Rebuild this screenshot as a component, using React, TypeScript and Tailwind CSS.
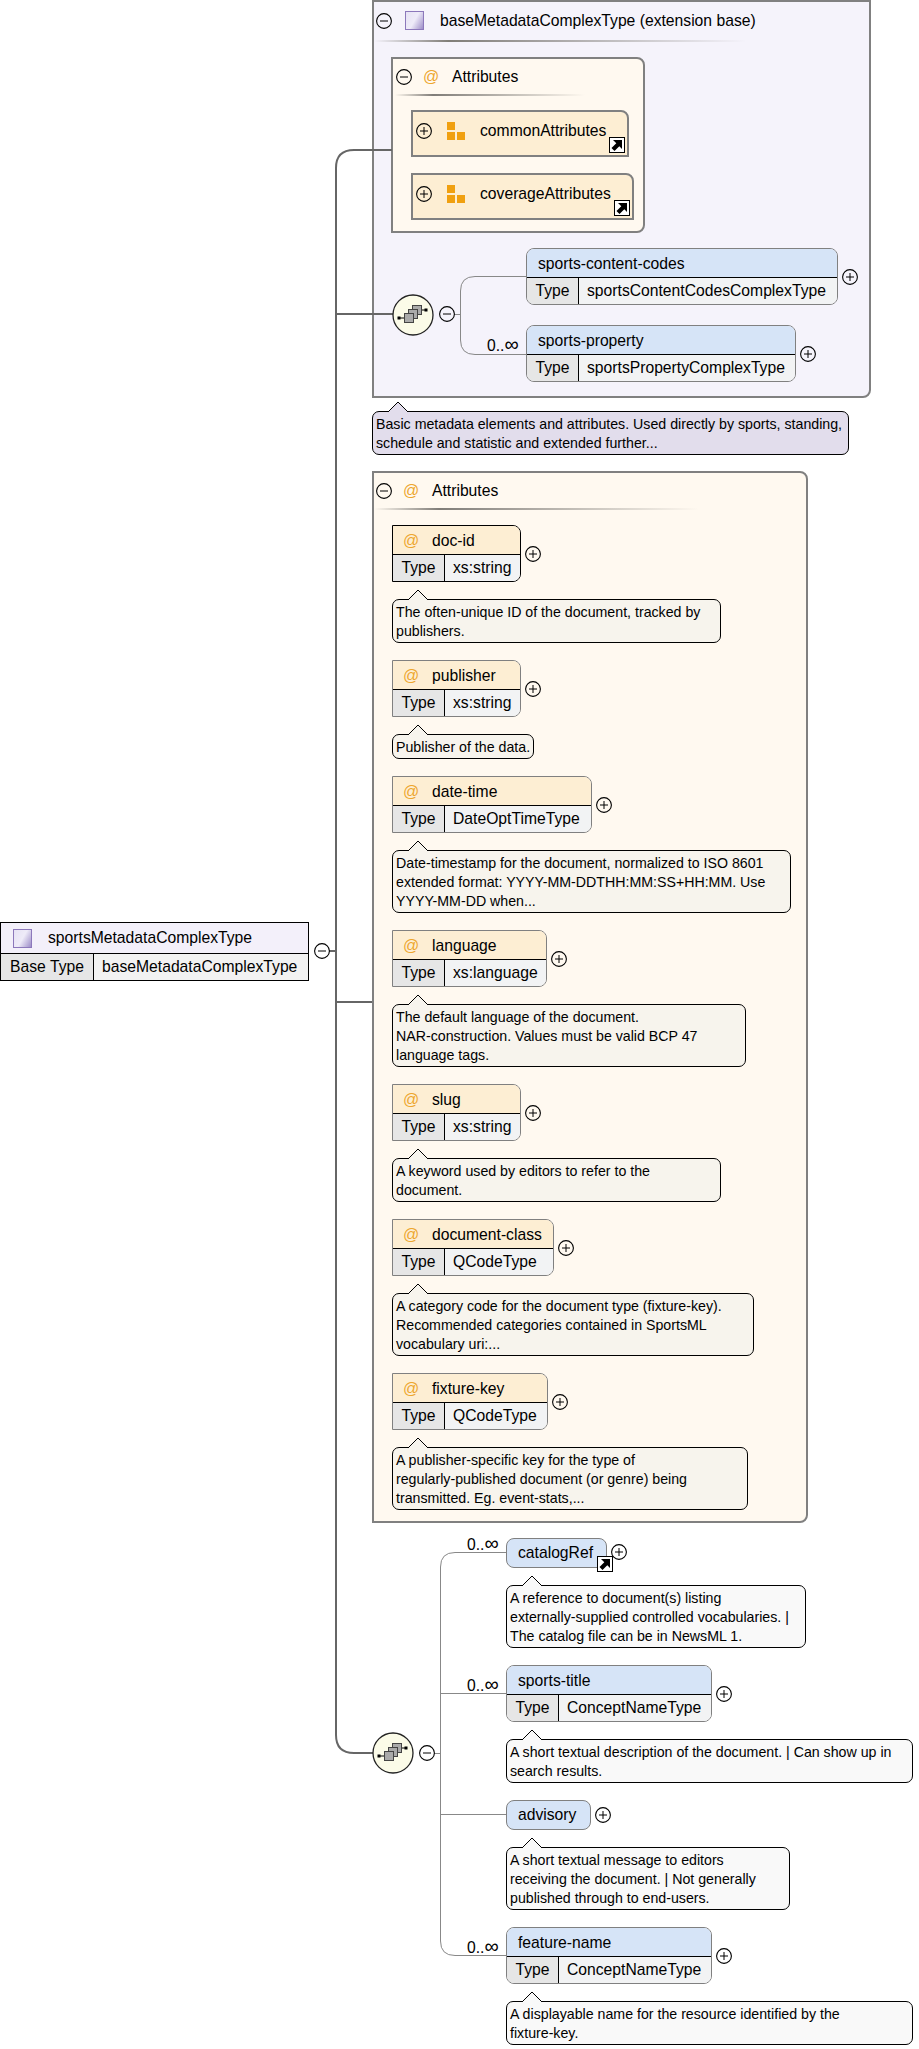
import React from 'react';

const Toggle: React.FC<{ open?: boolean; className?: string }> = ({ open, className = '' }) => (
  <svg width="16" height="16" viewBox="0 0 16 16" className={`shrink-0 ${className}`}>
    <circle cx="8" cy="8" r="7.4" fill="none" stroke="#000" strokeWidth="1.1" />
    <path d={open ? 'M4 8H12' : 'M4 8H12M8 4V12'} stroke="#000" strokeWidth="1" />
  </svg>
);

const TypeIcon: React.FC = () => (
  <div className="w-[19px] h-[19px] shrink-0 border border-[#8c78bb] bg-linear-[120deg] from-[#e6e2f4] via-[#eeebf8] to-[#9d8dc8]" />
);

const GroupIcon: React.FC = () => (
  <svg width="18" height="18" viewBox="0 0 18 18" className="shrink-0">
    <rect x="0" y="0" width="8" height="8" fill="#f0a010" />
    <rect x="0" y="10" width="8" height="8" fill="#f0a010" />
    <rect x="10" y="10" width="8" height="8" fill="#f0a010" />
  </svg>
);

const RefArrow: React.FC<{ className?: string }> = ({ className = '' }) => (
  <svg width="16" height="16" viewBox="0 0 16 16" className={`absolute ${className}`}>
    <rect x="0.5" y="0.5" width="15" height="15" fill="#fff" stroke="#000" />
    <path d="M4 3H13V12L10.3 9.3L5.5 14L2.5 11L7.3 6.2Z" fill="#000" />
  </svg>
);

const Divider: React.FC<{ className: string }> = ({ className }) => (
  <div className={`h-[2px] bg-linear-to-r from-transparent via-[#807d78] via-20% to-transparent ${className}`} />
);

const AtSign: React.FC = () => (
  <span className="w-[14px] shrink-0 text-[16px] leading-none text-[#eda62e] flex justify-center">@</span>
);

// element / attribute box with optional Type row
const Node: React.FC<{
  name: string;
  type?: string;
  attr?: boolean;
  selected?: boolean;
  width: string;
  children?: React.ReactNode;
}> = ({ name, type, attr, selected, width, children }) => (
  <div className="flex items-center">
    <div
      className={`relative ${width} border box-border ${selected ? 'border-black' : 'border-[#808080]'} ${
        attr ? 'rounded-r-[8px]' : 'rounded-[8px]'
      }`}
    >
      <div
        className={`h-[28px] pt-[1px] flex items-center ${
          attr ? 'bg-[#fdeed3] pl-[11px] rounded-tr-[7px]' : `bg-[#d6e4f7] pl-[11px] rounded-t-[7px] ${type ? '' : 'rounded-b-[7px]'}`
        }`}
      >
        {attr && <AtSign />}
        <span className={`text-[15.7px] text-black whitespace-nowrap ${attr ? 'ml-[14px]' : ''}`}>{name}</span>
      </div>
      {type && (
        <div className={`h-[27px] flex border-t border-black ${attr ? 'rounded-br-[7px]' : 'rounded-b-[7px]'} overflow-hidden`}>
          <div className="w-[51px] shrink-0 bg-[#e6e6e6] border-r border-black box-content flex items-center justify-center text-[15.7px] text-black">
            Type
          </div>
          <div className="flex-1 bg-[#f2f3f4] flex items-center pl-[8px] text-[15.7px] text-black whitespace-nowrap">{type}</div>
        </div>
      )}
      {children}
    </div>
    <Toggle className="ml-[4px]" />
  </div>
);

const Occurs: React.FC<{ className?: string }> = ({ className = 'top-[9px]' }) => (
  <span className={`absolute -left-[39px] w-[33px] text-[15.7px] text-black leading-[18px] whitespace-nowrap ${className}`}>
    0..<span className="text-[20px] leading-none">∞</span>
  </span>
);

const Note: React.FC<{ text: string; width: string; tone: string; fill: string }> = ({ text, width, tone, fill }) => (
  <div className={`relative ${width} ${tone} border border-black rounded-[7px] px-[3px] pt-[3px] pb-[1px] text-[14.2px] leading-[19px] text-black whitespace-pre`}>
    <svg width="22" height="12" viewBox="0 0 22 12" className="absolute left-[14px] -top-[11px]">
      <path d="M1 11L11 1L21 11" fill={fill} stroke="#000" strokeWidth="1" />
      <rect x="2" y="10.5" width="18" height="2" fill={fill} />
    </svg>
    {text}
  </div>
);

const attributes = [
  { name: 'doc-id', type: 'xs:string', width: 'w-[129px]', selected: true, noteWidth: 'w-[329px]', note: 'The often-unique ID of the document, tracked by\npublishers.' },
  { name: 'publisher', type: 'xs:string', width: 'w-[129px]', noteWidth: 'w-[142px]', note: 'Publisher of the data.' },
  { name: 'date-time', type: 'DateOptTimeType', width: 'w-[200px]', noteWidth: 'w-[399px]', note: 'Date-timestamp for the document, normalized to ISO 8601\nextended format: YYYY-MM-DDTHH:MM:SS+HH:MM. Use\nYYYY-MM-DD when...' },
  { name: 'language', type: 'xs:language', width: 'w-[155px]', noteWidth: 'w-[354px]', note: 'The default language of the document.\nNAR-construction. Values must be valid BCP 47\nlanguage tags.' },
  { name: 'slug', type: 'xs:string', width: 'w-[129px]', noteWidth: 'w-[329px]', note: 'A keyword used by editors to refer to the\ndocument.' },
  { name: 'document-class', type: 'QCodeType', width: 'w-[162px]', noteWidth: 'w-[362px]', note: 'A category code for the document type (fixture-key).\nRecommended categories contained in SportsML\nvocabulary uri:...' },
  { name: 'fixture-key', type: 'QCodeType', width: 'w-[156px]', noteWidth: 'w-[356px]', note: 'A publisher-specific key for the type of\nregularly-published document (or genre) being\ntransmitted. Eg. event-stats,...' },
];

const Sequence: React.FC<{ className: string }> = ({ className }) => (
  <svg width="42" height="42" viewBox="0 0 42 42" className={`absolute ${className}`}>
    <circle cx="21" cy="21" r="20" fill="#fbfbe8" stroke="#222" strokeWidth="1.3" />
    <path d="M7 24H13M30 16H34" stroke="#000" strokeWidth="1" />
    <rect x="5.5" y="22.5" width="3" height="3" fill="#000" />
    <rect x="32.5" y="14.5" width="3" height="3" fill="#000" />
    <rect x="20.5" y="11.5" width="9" height="9" fill="#aaa" stroke="#444" />
    <rect x="16.5" y="15.5" width="9" height="9" fill="#aaa" stroke="#444" />
    <rect x="12.5" y="19.5" width="9" height="9" fill="#aaa" stroke="#444" />
  </svg>
);

export default function App() {
  return (
    <div className="relative w-[919px] h-[2049px] bg-white overflow-hidden font-['Liberation_Sans',Arial,sans-serif]">
      {/* root type */}
      <div className="absolute left-0 top-[922px] w-[309px] border border-black text-[15.7px] text-black">
        <div className="h-[31px] bg-[#f3f0fa] border-b border-black flex items-center pl-[12px]">
          <TypeIcon />
          <span className="ml-[16px]">sportsMetadataComplexType</span>
        </div>
        <div className="h-[26px] flex">
          <div className="w-[92px] bg-[#e6e6e6] border-r border-black box-content flex items-center justify-center whitespace-nowrap">Base Type</div>
          <div className="flex-1 bg-[#f2f2f2] flex items-center pl-[8px] whitespace-nowrap">baseMetadataComplexType</div>
        </div>
      </div>

      {/* extension base */}
      <div className="absolute left-[372px] top-0 w-[499px] h-[398px] border-2 border-[#808080] rounded-br-[8px] bg-[#f5f3fb]">
        <div className="h-[37px] flex items-center pl-[2px] mb-[1px]">
          <Toggle open />
          <div className="ml-[13px]"><TypeIcon /></div>
          <span className="ml-[16px] text-[15.7px] text-black whitespace-nowrap">baseMetadataComplexType (extension base)</span>
        </div>
        <Divider className="w-[372px]" />
        <div className="ml-[17px] mt-[15px] w-[254px] h-[176px] border-2 border-[#808080] rounded-r-[8px] bg-[#fff9f0]">
          <div className="h-[35px] flex items-center pl-[3px]">
            <Toggle open />
            <div className="ml-[12px] flex"><AtSign /></div>
            <span className="ml-[14px] text-[15.7px] text-black">Attributes</span>
          </div>
          <Divider className="w-[190px] ml-[2px]" />
          <div className="mt-[14px] ml-[18px] flex flex-col gap-[16px]">
            <div className="relative w-[218px] h-[47px] border-2 border-[#808080] rounded-tr-[8px] bg-[#fdeed3] flex items-center pl-[3px] pb-[5px]">
              <Toggle />
              <div className="ml-[15px]"><GroupIcon /></div>
              <span className="ml-[15px] text-[15.7px] text-black whitespace-nowrap">commonAttributes</span>
              <RefArrow className="right-[2px] bottom-[2px]" />
            </div>
            <div className="relative w-[223px] h-[47px] border-2 border-[#808080] rounded-tr-[8px] bg-[#fdeed3] flex items-center pl-[3px] pb-[5px]">
              <Toggle />
              <div className="ml-[15px]"><GroupIcon /></div>
              <span className="ml-[15px] text-[15.7px] text-black whitespace-nowrap">coverageAttributes</span>
              <RefArrow className="right-[2px] bottom-[2px]" />
            </div>
          </div>
        </div>
        <div className="mt-[15px] ml-[152px] flex flex-col gap-[20px]">
          <Node name="sports-content-codes" type="sportsContentCodesComplexType" width="w-[312px]" />
          <div className="relative">
            <Occurs />
            <Node name="sports-property" type="sportsPropertyComplexType" width="w-[270px]" />
          </div>
        </div>
      </div>

      <div className="absolute left-[372px] top-[411px]">
        <Note
          width="w-[477px]"
          tone="bg-[#e2ddec]"
          fill="#e2ddec"
          text={'Basic metadata elements and attributes. Used directly by sports, standing,\nschedule and statistic and extended further...'}
        />
      </div>

      {/* attributes */}
      <div className="absolute left-[372px] top-[471px] w-[436px] h-[1052px] border-2 border-[#808080] rounded-r-[8px] bg-[#fff9f0]">
        <div className="h-[35px] flex items-center pl-[2px]">
          <Toggle open />
          <div className="ml-[12px] flex"><AtSign /></div>
          <span className="ml-[14px] text-[15.7px] text-black">Attributes</span>
        </div>
        <Divider className="w-[325px]" />
        <div className="mt-[15px] ml-[18px] flex flex-col gap-[17px]">
          {attributes.map((a) => (
            <React.Fragment key={a.name}>
              <Node attr name={a.name} type={a.type} width={a.width} selected={a.selected} />
              <Note text={a.note} width={a.noteWidth} tone="bg-[#f7f4ed]" fill="#f7f4ed" />
            </React.Fragment>
          ))}
        </div>
      </div>

      {/* sequence children */}
      <div className="absolute left-[506px] top-[1538px] flex flex-col gap-[17px]">
        <div className="relative">
          <Occurs className="-top-[5px]" />
          <div className="flex items-center">
            <div className="relative w-[101px] h-[30px] border border-[#808080] rounded-[8px] bg-[#d6e4f7] flex items-center pl-[11px] text-[15.7px] text-black">
              catalogRef
              <RefArrow className="-right-[7px] -bottom-[5px]" />
            </div>
            <Toggle className="ml-[4px] -mt-[2px]" />
          </div>
        </div>
        <Note
          width="w-[300px]"
          tone="bg-[#f9f9f9]"
          fill="#f9f9f9"
          text={'A reference to document(s) listing\nexternally-supplied controlled vocabularies. |\nThe catalog file can be in NewsML 1.'}
        />
        <div className="relative">
          <Occurs />
          <Node name="sports-title" type="ConceptNameType" width="w-[206px]" />
        </div>
        <Note
          width="w-[407px]"
          tone="bg-[#f9f9f9]"
          fill="#f9f9f9"
          text={'A short textual description of the document. | Can show up in\nsearch results.'}
        />
        <div className="flex items-center">
          <div className="w-[85px] h-[30px] border border-[#808080] rounded-[8px] bg-[#d6e4f7] flex items-center pl-[11px] text-[15.7px] text-black">
            advisory
          </div>
          <Toggle className="ml-[4px]" />
        </div>
        <Note
          width="w-[284px]"
          tone="bg-[#f9f9f9]"
          fill="#f9f9f9"
          text={'A short textual message to editors\nreceiving the document. | Not generally\npublished through to end-users.'}
        />
        <div className="relative">
          <Occurs />
          <Node name="feature-name" type="ConceptNameType" width="w-[206px]" />
        </div>
        <Note
          width="w-[407px]"
          tone="bg-[#f9f9f9]"
          fill="#f9f9f9"
          text={'A displayable name for the resource identified by the\nfixture-key.'}
        />
      </div>

      {/* connectors */}
      <svg width="919" height="2049" className="absolute left-0 top-0 pointer-events-none" fill="none">
        <path
          d="M392 150H354Q336 150 336 168V1735Q336 1753 354 1753H373M336 314H393M336 1002H372M329 951H336"
          stroke="#666"
          strokeWidth="2"
        />
        <path
          d="M454 314.5H460M526 276.5H475Q460.5 276.5 460.5 291V340Q460.5 354.5 475 354.5H526M434 1753.5H440M506 1552.5H455Q440.5 1552.5 440.5 1567V1941Q440.5 1955.5 455 1955.5H506M440 1693.5H506M440 1814.5H506"
          stroke="#888"
          strokeWidth="1"
        />
      </svg>

      <Sequence className="left-[392px] top-[294px]" />
      <Sequence className="left-[372px] top-[1732px]" />
      <Toggle open className="absolute left-[314px] top-[943px]" />
      <Toggle open className="absolute left-[439px] top-[306px]" />
      <Toggle open className="absolute left-[419px] top-[1745px]" />
    </div>
  );
}
